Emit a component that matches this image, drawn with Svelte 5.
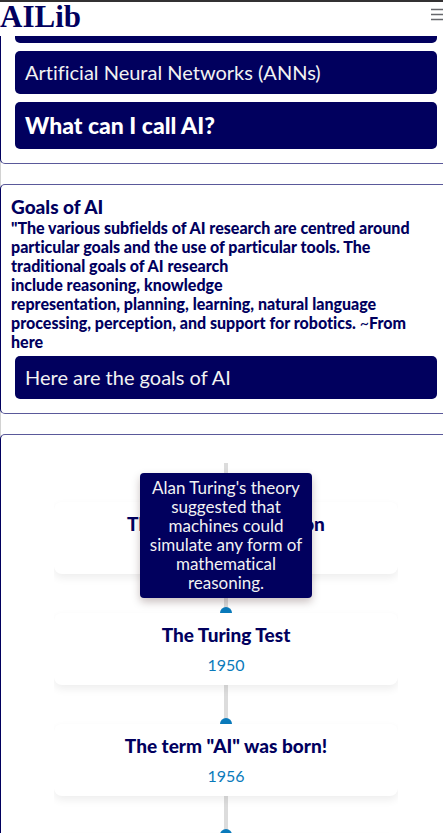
<script>
  const topics = ['Robotics', 'Artificial Neural Networks (ANNs)'];

  const events = [
    {
      title: 'Theory of Computation',
      year: '1936',
      note: "Alan Turing's theory suggested that machines could simulate any form of mathematical reasoning."
    },
    { title: 'The Turing Test', year: '1950' },
    { title: 'The term "AI" was born!', year: '1956' },
    { title: 'The first AI winter', year: '1974' }
  ];
</script>

<div class="page">
  <header>
    <a class="brand" href="#top">AILib</a>
    <button class="menu" aria-label="Open menu">
      <svg width="18" height="13" viewBox="0 0 18 13" aria-hidden="true">
        <path d="M0 1.5H18M0 6.5H18M0 11.5H18" stroke="#66676b" stroke-width="1.6" />
      </svg>
    </button>
  </header>

  <main>
    <section class="card topics">
      {#each topics as topic}
        <button class="bar">{topic}</button>
      {/each}
      <button class="bar strong">What can I call AI?</button>
    </section>

    <section class="card goals">
      <h2>Goals of AI</h2>
      <p>
        "The various subfields of AI research are centred around<br />
        particular goals and the use of particular tools. The<br />
        traditional goals of AI research<br />
        include reasoning, knowledge<br />
        representation, planning, learning, natural language<br />
        processing, perception, and support for robotics. <span class="tilde">~</span><a href="#source">From<br />
        here</a>
      </p>
      <button class="bar">Here are the goals of AI</button>
    </section>

    <section class="card history">
      <ol class="timeline">
        {#each events as event}
          <li>
            <div class="event">
              <h3>{event.title}</h3>
              <time datetime={event.year}>{event.year}</time>
            </div>
            {#if event.note}
              <div class="tooltip" role="tooltip">{event.note}</div>
            {/if}
          </li>
        {/each}
      </ol>
    </section>
  </main>
</div>

<style>
  :global(body) {
    margin: 0;
  }

  .page {
    --navy: #01005e;
    --blue: #0a7abb;
    box-sizing: border-box;
    height: 100vh;
    overflow: hidden;
    font-family: Lato, 'Noto Sans', sans-serif;
    font-variant-ligatures: none;
    color: var(--navy);
    background: linear-gradient(#d2d2d2, #d2d2d2) 0 0 / 1px 100% no-repeat #fff;
  }

  .page * {
    box-sizing: border-box;
  }

  header {
    position: relative;
    z-index: 5;
    display: flex;
    justify-content: space-between;
    align-items: flex-start;
    height: 36px;
    overflow: hidden;
    border-top: 2px solid #333132;
    background: #fff;
  }

  .brand {
    font: bold 31px/30px 'Liberation Serif', serif;
    color: var(--navy);
    text-decoration: none;
  }

  .menu {
    margin: 6px -6px 0 0;
    padding: 0;
    border: 0;
    background: none;
    line-height: 0;
  }

  main {
    display: flex;
    flex-direction: column;
    gap: 20px;
    width: calc(100% + 9px);
    margin-top: -51px;
  }

  .card {
    padding: 10px;
    border: 1px solid var(--navy);
    border-bottom-color: #5a599a;
    border-top-color: #5a599a;
    border-radius: 5px;
    background: #fff;
  }

  .topics,
  .goals {
    display: flex;
    flex-direction: column;
  }

  .bar {
    display: block;
    margin: 4px;
    padding: 10px;
    border: 0;
    border-radius: 5px;
    background: var(--navy);
    color: #f2f2f2;
    font-family: inherit;
    font-size: 20px;
    line-height: 23px;
    font-variant-ligatures: none;
    text-align: left;
  }

  .bar.strong {
    padding: 12px 10px;
    color: #fff;
    font-size: 23px;
    font-weight: 900;
  }

  h2,
  h3,
  p {
    margin: 0;
  }

  h2 {
    font-size: 19px;
    line-height: 23px;
    font-weight: 900;
  }

  p {
    margin-bottom: 1px;
    font-size: 16px;
    line-height: 19px;
    font-weight: 900;
    white-space: nowrap;
  }

  p a {
    color: inherit;
    text-decoration: none;
  }

  .tilde {
    font-weight: 400;
  }

  .history {
    padding: 28px 10px;
  }

  .timeline {
    position: relative;
    display: flex;
    flex-direction: column;
    gap: 39px;
    width: 80%;
    margin: 0 auto;
    padding: 39px 0 0;
    overflow: hidden;
    list-style: none;
    background: linear-gradient(#dcdcdc, #dcdcdc) 50% 0 / 4px 100% no-repeat;
  }

  li {
    position: relative;
  }

  li::before {
    content: '';
    position: absolute;
    top: -6px;
    left: calc(50% - 6px);
    width: 12px;
    height: 12px;
    border-radius: 50%;
    background: var(--blue);
  }

  .event {
    position: relative;
    display: flex;
    flex-direction: column;
    align-items: center;
    gap: 9px;
    height: 72px;
    padding-top: 11px;
    border-radius: 8px;
    background: #fff;
    box-shadow: 0 4px 8px rgba(0, 0, 0, 0.07);
  }

  h3 {
    font-size: 19px;
    line-height: 22px;
    font-weight: 900;
  }

  time {
    color: var(--blue);
    font-size: 16px;
    line-height: 20px;
  }

  .tooltip {
    position: absolute;
    z-index: 2;
    bottom: -24px;
    left: 25%;
    width: 50%;
    padding: 5px 8px 6px;
    border-radius: 4px;
    background: var(--navy);
    color: #f2f2f2;
    font-size: 17px;
    line-height: 19px;
    text-align: center;
    box-shadow: 0 4px 8px rgba(40, 0, 0, 0.25);
  }
</style>
